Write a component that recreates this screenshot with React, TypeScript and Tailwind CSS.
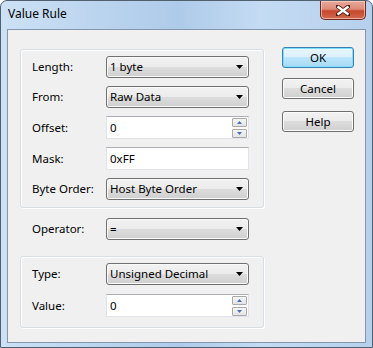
import React from "react";

const font = { fontFamily: '"Noto Sans", "Open Sans", sans-serif' };

function Combo({ text }: { text: string }) {
  return (
    <div className="flex h-[22px] w-[143px] items-center rounded-[3px] border border-[#707070] bg-[linear-gradient(#f2f2f2_0%,#ebebeb_50%,#dddddd_50%,#cfcfcf_100%)] pl-[3px] pr-[4px] shadow-[inset_0_0_0_1px_#fafafa]">
      <span className="flex-1 leading-none">{text}</span>
      <svg width="7" height="4" viewBox="0 0 7 4" className="mr-[1px]">
        <path d="M0 0H7L3.5 4Z" fill="#000" />
      </svg>
    </div>
  );
}

function Spin() {
  return (
    <div className="flex flex-col gap-[2px] pr-[1px]">
      {[0, 1].map((i) => (
        <div
          key={i}
          className="flex h-[9px] w-[15px] items-center justify-center rounded-[1px] border border-[#a9a9a9] bg-[linear-gradient(#f6f6f6,#e4e4e4)]"
        >
          <svg width="5" height="3" viewBox="0 0 5 3">
            {i === 0 ? (
              <path d="M0 3H5L2.5 0Z" fill="#4a6fb8" />
            ) : (
              <path d="M0 0H5L2.5 3Z" fill="#4a6fb8" />
            )}
          </svg>
        </div>
      ))}
    </div>
  );
}

function Input({ text, spin }: { text: string; spin?: boolean }) {
  return (
    <div className="flex h-[23px] w-[143px] items-center border border-[#e2e3ea] border-t-[#abadb3] bg-white pl-[3px]">
      <span className="flex-1 leading-none">{text}</span>
      {spin && <Spin />}
    </div>
  );
}

function Row({
  label,
  children,
  className = "",
}: {
  label: string;
  children: React.ReactNode;
  className?: string;
}) {
  return (
    <div className={"flex items-center " + className}>
      <div className="w-[74px] leading-none">{label}</div>
      {children}
    </div>
  );
}

function Btn({ text, def, className = "" }: { text: string; def?: boolean; className?: string }) {
  return (
    <div
      className={
        "flex h-[21px] w-[72px] items-center justify-center rounded-[3px] border leading-none " +
        (def
          ? "border-[#3c7fb1] bg-[linear-gradient(#eaf6fd_0%,#d9f0fc_50%,#bee6fd_50%,#a7d9f5_100%)] shadow-[inset_0_0_0_1px_#7ee0f8] "
          : "border-[#707070] bg-[linear-gradient(#f2f2f2_0%,#ebebeb_50%,#dddddd_50%,#cfcfcf_100%)] shadow-[inset_0_0_0_1px_#fbfbfb] ") +
        className
      }
    >
      {text}
    </div>
  );
}

export default function App() {
  return (
    <div
      style={font}
      className="flex h-[348px] w-[373px] flex-col overflow-hidden rounded-t-[7px] border border-[#50606f] bg-[linear-gradient(90deg,#cde1f5_0%,#bcd5ef_25%,#aecbe9_48%,#c4dbf3_70%,#b6d0ec_100%)] text-[11.5px] text-black"
    >
      <div className="flex h-[28px] items-start">
        <div className="pl-[7px] pt-[7px] text-[12px] leading-none">Value Rule</div>
        <div className="ml-auto mr-[6px] flex h-[19px] w-[46px] items-center justify-center rounded-b-[5px] border border-t-0 border-[#6d2a20] bg-[linear-gradient(#e9a99b_0%,#dd8a78_45%,#c7462d_55%,#d26a4f_100%)] shadow-[inset_0_0_0_1px_rgba(255,220,210,0.6)]">
          <svg width="14" height="11" viewBox="0 0 14 11">
            <path
              d="M1 1L13 10M13 1L1 10"
              stroke="#4a1c14"
              strokeWidth="4"
              strokeLinecap="square"
            />
            <path d="M1.5 1.5L12.5 9.5M12.5 1.5L1.5 9.5" stroke="#fff" strokeWidth="2.4" />
          </svg>
        </div>
      </div>
      <div className="mx-[6px] mb-[4px] flex flex-1 items-start border border-[#8396ab] bg-[#f0f0f0] pl-[12px] pt-[17px]">
        <div className="mt-[2px] flex w-[244px] flex-col">
          <div className="flex flex-col rounded-[3px] border border-[#d5dfe5] pb-[7px] pl-[11px] pt-[6px] shadow-[1px_1px_0_#fff,inset_1px_1px_0_#fff]">
            <Row label="Length:">
              <Combo text="1 byte" />
            </Row>
            <Row label="From:" className="mt-[8px]">
              <Combo text="Raw Data" />
            </Row>
            <Row label="Offset:" className="mt-[8px]">
              <Input text="0" spin />
            </Row>
            <Row label="Mask:" className="mt-[8px]">
              <Input text="0xFF" />
            </Row>
            <Row label="Byte Order:" className="mt-[8px]">
              <Combo text="Host Byte Order" />
            </Row>
          </div>
          <Row label="Operator:" className="mt-[10px] pl-[12px]">
            <Combo text="=" />
          </Row>
          <div className="mt-[16px] flex flex-col rounded-[3px] border border-[#d5dfe5] pb-[10px] pl-[11px] pt-[6px] shadow-[1px_1px_0_#fff,inset_1px_1px_0_#fff]">
            <Row label="Type:">
              <Combo text="Unsigned Decimal" />
            </Row>
            <Row label="Value:" className="mt-[9px]">
              <Input text="0" spin />
            </Row>
          </div>
        </div>
        <div className="ml-[18px] flex flex-col">
          <Btn text="OK" def />
          <Btn text="Cancel" className="mt-[10px]" />
          <Btn text="Help" className="mt-[12px]" />
        </div>
      </div>
    </div>
  );
}
